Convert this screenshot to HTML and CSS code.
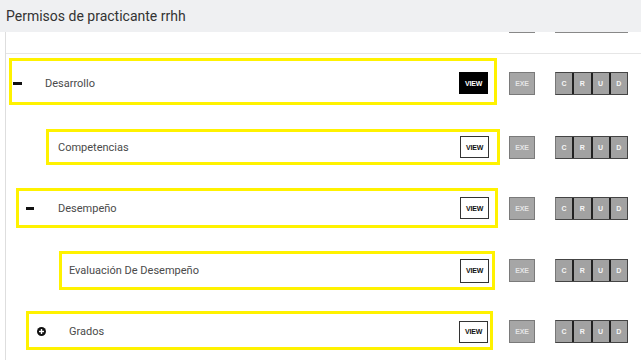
FILE: index.html
```html
<!DOCTYPE html>
<html lang="es">
<head>
<meta charset="utf-8">
<title>Permisos de practicante rrhh</title>
<link rel="stylesheet" href="styles.css">
</head>
<body>
<header class="header">Permisos de practicante rrhh</header>
<div class="panel">
  <div class="stub-row">
    <div class="actions">
      <span class="stub stub-exe"></span>
      <span class="stub stub-crud"></span>
    </div>
  </div>
  <div class="rows">
    <div class="row row-1">
      <div class="box">
        <span class="icon-minus"></span>
        <span class="label">Desarrollo</span>
        <span class="view view-active">VIEW</span>
      </div>
      <div class="actions">
        <span class="exe">EXE</span>
        <span class="crud"><span class="cell">C</span><span class="cell">R</span><span class="cell">U</span><span class="cell">D</span></span>
      </div>
    </div>
    <div class="row row-2">
      <div class="box">
        <span class="label">Competencias</span>
        <span class="view">VIEW</span>
      </div>
      <div class="actions">
        <span class="exe">EXE</span>
        <span class="crud"><span class="cell">C</span><span class="cell">R</span><span class="cell">U</span><span class="cell">D</span></span>
      </div>
    </div>
    <div class="row row-3">
      <div class="box">
        <span class="icon-minus"></span>
        <span class="label">Desempeño</span>
        <span class="view">VIEW</span>
      </div>
      <div class="actions">
        <span class="exe">EXE</span>
        <span class="crud"><span class="cell">C</span><span class="cell">R</span><span class="cell">U</span><span class="cell">D</span></span>
      </div>
    </div>
    <div class="row row-4">
      <div class="box">
        <span class="label">Evaluación De Desempeño</span>
        <span class="view">VIEW</span>
      </div>
      <div class="actions">
        <span class="exe">EXE</span>
        <span class="crud"><span class="cell">C</span><span class="cell">R</span><span class="cell">U</span><span class="cell">D</span></span>
      </div>
    </div>
    <div class="row row-5">
      <div class="box">
        <svg class="icon-plus" width="9" height="9" viewBox="0 0 9 9"><circle cx="4.5" cy="4.5" r="4.5" fill="#111"/><rect x="2" y="3.8" width="5" height="1.4" fill="#fff"/><rect x="3.8" y="2" width="1.4" height="5" fill="#fff"/></svg>
        <span class="label">Grados</span>
        <span class="view">VIEW</span>
      </div>
      <div class="actions">
        <span class="exe">EXE</span>
        <span class="crud"><span class="cell">C</span><span class="cell">R</span><span class="cell">U</span><span class="cell">D</span></span>
      </div>
    </div>
  </div>
</div>
</body>
</html>
```

FILE: styles.css
```css
html, body {
  margin: 0;
  padding: 0;
  background: #fff;
  width: 641px;
  height: 360px;
  overflow: hidden;
  font-family: Roboto, "Liberation Sans", sans-serif;
}

.header {
  height: 32px;
  box-sizing: border-box;
  padding-left: 6px;
  display: flex;
  align-items: center;
  background: #eff0f2;
  color: #333;
  font-size: 14px;
}

.panel {
  margin-left: 5px;
  border-left: 1px solid #dedede;
  height: 328px;
}

.stub-row {
  height: 21px;
  border-bottom: 1px solid #e6e6e6;
  display: flex;
}

.stub {
  display: block;
  height: 0;
  border-top: 1px solid #888;
}

.stub-exe { width: 26px; }
.stub-crud { width: 73px; }

.rows {
  display: flex;
  flex-direction: column;
  padding-top: 4px;
}

.row {
  display: flex;
  align-items: center;
}

.box {
  box-sizing: border-box;
  border: 3px solid #fff200;
  display: flex;
  align-items: center;
}

.label {
  font-size: 11px;
  color: #4a4a4a;
}

.icon-minus {
  display: block;
  width: 9px;
  height: 3px;
  background: #111;
}

.icon-plus {
  display: block;
  flex: none;
}

.view {
  margin-left: auto;
  box-sizing: border-box;
  width: 29px;
  height: 22px;
  border: 1px solid #333;
  background: #fff;
  color: #111;
  font-family: "Liberation Sans", Roboto, sans-serif;
  font-weight: 700;
  font-size: 7px;
  letter-spacing: -0.2px;
  display: flex;
  align-items: center;
  justify-content: center;
}

.view-active {
  background: #000;
  color: #fff;
  border-color: #000;
}

.actions {
  margin-left: auto;
  padding-right: 13px;
  display: flex;
  gap: 20px;
}

.exe {
  box-sizing: border-box;
  width: 26px;
  height: 23px;
  background: #a6a6a6;
  border: 1px solid #7a7a7a;
  color: #e4e4e4;
  font-family: "Liberation Sans", Roboto, sans-serif;
  font-weight: 700;
  font-size: 7px;
  letter-spacing: -0.2px;
  display: flex;
  align-items: center;
  justify-content: center;
}

.crud {
  box-sizing: border-box;
  width: 73px;
  height: 23px;
  display: flex;
  border: 1px solid #444;
  border-left-color: #777;
  background: #222;
  gap: 2px;
}

.cell {
  flex: 1;
  background: #a2a2a2;
  color: #f6f6f6;
  font-family: "Liberation Sans", Roboto, sans-serif;
  font-weight: 700;
  font-size: 7px;
  display: flex;
  align-items: center;
  justify-content: center;
}

/* row variants */
.row-1 .box {
  margin-left: 3px;
  width: 488px;
  height: 47px;
  padding: 3px 6px 0 1px;
}
.row-1 .icon-minus { margin-right: 23px; }
.row-1 .actions { margin-top: 3px; }

.row-2 { margin-top: 24px; }
.row-2 .box {
  margin-left: 40px;
  width: 454px;
  height: 36px;
  padding: 0 8px 0 9px;
}

.row-3 { margin-top: 23px; }
.row-3 .box {
  margin-left: 10px;
  width: 482px;
  height: 40px;
  padding: 0 6px 0 7px;
}
.row-3 .icon-minus { width: 8px; margin-right: 24px; }

.row-4 { margin-top: 23px; }
.row-4 .box {
  margin-left: 53px;
  width: 436px;
  height: 39px;
  padding: 0 3px 0 7px;
}
.row-4 .view { height: 24px; }

.row-5 { margin-top: 21px; }
.row-5 .box {
  margin-left: 20px;
  width: 467px;
  height: 39px;
  padding: 2px 2px 0 8px;
}
.row-5 .icon-plus { margin-right: 23px; }
.row-5 .actions { margin-top: 2px; }
```
